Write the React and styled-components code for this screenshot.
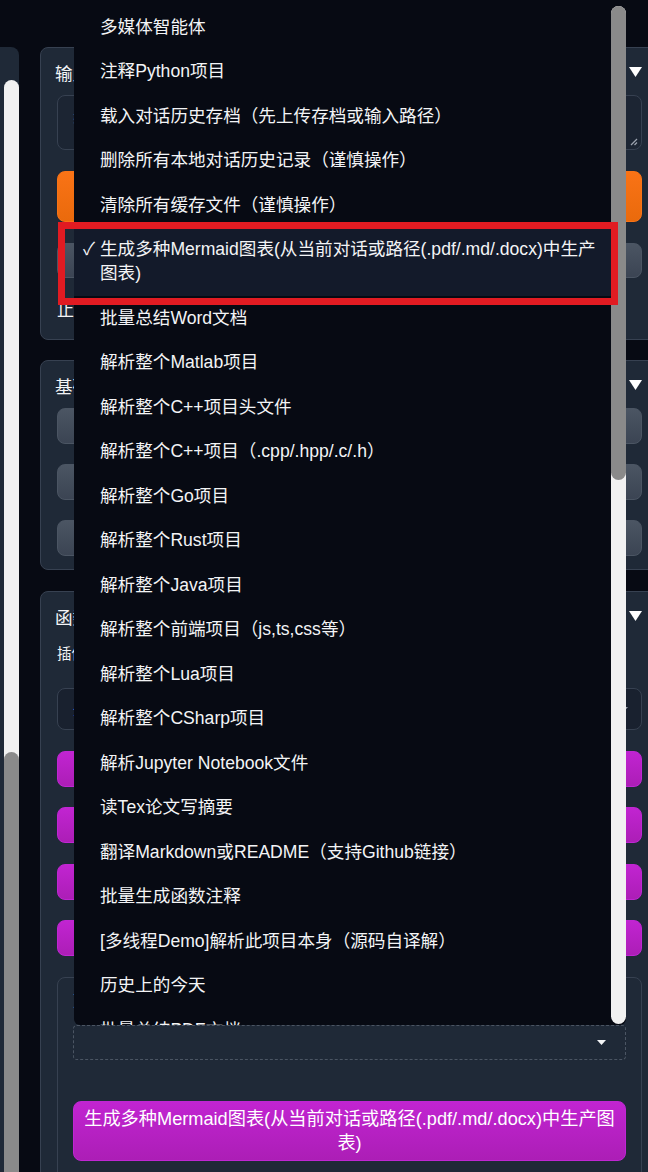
import React from 'react'
import styled, { createGlobalStyle } from 'styled-components'

const menuItems = [
  '多媒体智能体',
  '注释Python项目',
  '载入对话历史存档（先上传存档或输入路径）',
  '删除所有本地对话历史记录（谨慎操作）',
  '清除所有缓存文件（谨慎操作）',
  ['生成多种Mermaid图表(从当前对话或路径(.pdf/.md/.docx)中生产', '图表)'],
  '批量总结Word文档',
  '解析整个Matlab项目',
  '解析整个C++项目头文件',
  '解析整个C++项目（.cpp/.hpp/.c/.h）',
  '解析整个Go项目',
  '解析整个Rust项目',
  '解析整个Java项目',
  '解析整个前端项目（js,ts,css等）',
  '解析整个Lua项目',
  '解析整个CSharp项目',
  '解析Jupyter Notebook文件',
  '读Tex论文写摘要',
  '翻译Markdown或README（支持Github链接）',
  '批量生成函数注释',
  '[多线程Demo]解析此项目本身（源码自译解）',
  '历史上的今天',
  '批量总结PDF文档',
]

const SELECTED = 5

const App = () => (
  <>
    <GlobalStyle />
    <Page>
      <LeftPanel>
        <Track>
          <Thumb />
        </Track>
      </LeftPanel>

      <Main>
        <Card $bottom={16}>
          <Header>
            <span>输入区</span>
            <Caret />
          </Header>
          <Body $gap={21}>
            <TextBox>
              <Placeholder>输入问题</Placeholder>
              <ResizeHandle />
            </TextBox>
            <Button $kind="orange" $height={51}>提交</Button>
            <ButtonRow>
              <Button $kind="grey" $height={35}>重置</Button>
              <Button $kind="grey" $height={35}>停止</Button>
            </ButtonRow>
            <Note>止步提示</Note>
          </Body>
        </Card>

        <Card $bottom={13}>
          <Header>
            <span>基础功能区</span>
            <Caret />
          </Header>
          <Body $gap={20}>
            <Button $kind="grey" $height={36}>学术语料润色</Button>
            <Button $kind="grey" $height={36}>中文学术润色</Button>
            <Button $kind="grey" $height={36}>查找语法错误</Button>
          </Body>
        </Card>

        <Card $bottom={16} $push={1}>
          <Header>
            <span>函数插件区</span>
            <Caret />
          </Header>
          <Body $gap={20.5} $top={16}>
            <Field>
              <SmallLabel>插件分类</SmallLabel>
              <Select>
                <SelectText>全部</SelectText>
                <SmallCaret $color="#9ca3af" />
              </Select>
            </Field>
            <Button $kind="purple" $height={36}>批量翻译PDF文档</Button>
            <Button $kind="purple" $height={36}>Arxiv论文翻译</Button>
            <Button $kind="purple" $height={36}>图片生成</Button>
            <Button $kind="purple" $height={36}>知识库问答</Button>
            <InnerBox>
              <SmallLabel $size={15}>更多函数插件</SmallLabel>
              <Dropdown>
                <SmallCaret $color="#f3f4f6" />
                {renderMenu()}
              </Dropdown>
              <Button $kind="purple" $height={60} $size={18.2}>
                生成多种Mermaid图表(从当前对话或路径(.pdf/.md/.docx)中生产图
                <br />
                表)
              </Button>
            </InnerBox>
          </Body>
        </Card>
      </Main>

      <Highlight />
    </Page>
  </>
)

const renderMenu = () => (
  <Menu>
    <OptionList>
      {menuItems.map((item, index) => (
        <Option key={index} $selected={index === SELECTED}>
          <Check>{index === SELECTED ? '✓' : ''}</Check>
          {Array.isArray(item) ? (
            <span>
              {item[0]}
              <br />
              {item[1]}
            </span>
          ) : (
            <span>{item}</span>
          )}
        </Option>
      ))}
    </OptionList>
    <MenuTrack>
      <MenuThumb />
    </MenuTrack>
  </Menu>
)

const Caret = () => (
  <svg width="13" height="10" viewBox="0 0 13 10">
    <polygon points="0,0 13,0 6.5,10" fill="#ffffff" />
  </svg>
)

const SmallCaret = ({ $color }) => (
  <CaretSpot>
    <svg width="9" height="5" viewBox="0 0 9 5">
      <polygon points="0,0 9,0 4.5,5" fill={$color} />
    </svg>
  </CaretSpot>
)

const ResizeHandle = () => (
  <HandleSpot>
    <svg width="8" height="8" viewBox="0 0 8 8">
      <line x1="1" y1="7" x2="7" y2="1" stroke="#9ca3af" strokeWidth="1.2" />
      <line x1="4.5" y1="7" x2="7" y2="4.5" stroke="#9ca3af" strokeWidth="1.2" />
    </svg>
  </HandleSpot>
)

const GlobalStyle = createGlobalStyle`
  html, body {
    margin: 0;
    padding: 0;
    background: #070a13;
    overflow: hidden;
  }
  body {
    font-family: "Liberation Sans", "Noto Sans CJK SC", sans-serif;
    color: #f3f4f6;
  }
  * { box-sizing: border-box; }
`

const Page = styled.div`
  position: relative;
  display: flex;
  align-items: flex-start;
  gap: 21px;
  width: 680px;
  height: 1172px;
  padding-top: 47px;
`

const LeftPanel = styled.div`
  display: flex;
  flex-direction: column;
  width: 19px;
  height: 1125px;
  padding: 33px 0 0 4px;
  background: #1f2937;
  border-top-right-radius: 8px;
  flex-shrink: 0;
`

const Track = styled.div`
  flex: 1;
  display: flex;
  flex-direction: column;
  justify-content: flex-end;
  background: #f1f1f1;
  border-radius: 8px 8px 0 0;
`

const Thumb = styled.div`
  height: 420px;
  background: #8a8a8a;
  border-radius: 8px 8px 0 0;
`

const Main = styled.div`
  display: flex;
  flex-direction: column;
  gap: 20px;
  width: 619px;
  flex-shrink: 0;
`

const Card = styled.section`
  display: flex;
  flex-direction: column;
  margin-top: ${({ $push }) => $push || 0}px;
  padding: 12px 16px ${({ $bottom }) => $bottom}px;
  background: #1f2937;
  border: 1px solid #374151;
  border-radius: 8px;
`

const Header = styled.div`
  display: flex;
  justify-content: space-between;
  align-items: center;
  height: 24px;
  margin-left: -2px;
  font-size: 17.6px;
`

const Body = styled.div`
  display: flex;
  flex-direction: column;
  gap: ${({ $gap }) => $gap}px;
  margin-top: ${({ $top }) => $top || 11}px;
`

const TextBox = styled.div`
  position: relative;
  height: 55px;
  padding: 12px 15px;
  background: #1c2533;
  border: 1px solid #374151;
  border-radius: 8px;
`

const Placeholder = styled.span`
  font-size: 14px;
  color: #6b7280;
`

const HandleSpot = styled.span`
  position: absolute;
  right: 3px;
  bottom: 3px;
  display: flex;
`

const Button = styled.button`
  display: flex;
  align-items: center;
  justify-content: center;
  flex: 1;
  min-height: ${({ $height }) => $height}px;
  padding: 0 8px;
  font-family: inherit;
  font-size: ${({ $size }) => $size || 17.6}px;
  line-height: 24px;
  text-align: center;
  color: #ffffff;
  border-radius: 8px;
  ${({ $kind }) =>
    $kind === 'orange'
      ? `
    background: linear-gradient(to bottom, #f97316, #ea6a0c);
    border: 1px solid #f97316;
  `
      : $kind === 'purple'
      ? `
    background: linear-gradient(to bottom, #c124d1, #ac1eb6);
    border: 1px solid #c026d3;
  `
      : `
    background: linear-gradient(to bottom, #4b5563, #3b4453);
    border: 1px solid #4b5563;
  `}
`

const ButtonRow = styled.div`
  display: flex;
  gap: 12px;
`

const Note = styled.div`
  font-size: 17px;
  line-height: 24px;
`

const Field = styled.div`
  display: flex;
  flex-direction: column;
  gap: 24px;
`

const SmallLabel = styled.div`
  font-size: ${({ $size }) => $size || 14.5}px;
  line-height: ${({ $size }) => ($size ? 22 : 20)}px;
`

const Select = styled.div`
  display: flex;
  align-items: center;
  justify-content: space-between;
  height: 42px;
  padding: 0 13px 0 15px;
  background: #19212f;
  border: 1px solid #374151;
  border-radius: 8px;
`

const SelectText = styled.span`
  font-size: 14px;
  color: #60a5fa;
`

const CaretSpot = styled.span`
  display: flex;
`

const InnerBox = styled.div`
  display: flex;
  flex-direction: column;
  padding: 12px 15px 20px;
  border: 1px solid #374151;
  border-radius: 8px;
  & > ${Button} {
    margin-top: 41px;
  }
`

const Dropdown = styled.div`
  position: relative;
  display: flex;
  align-items: center;
  justify-content: flex-end;
  height: 35px;
  margin-top: 13px;
  padding-right: 19px;
  border: 1px dashed #4b5563;
  border-radius: 4px;
`

const Menu = styled.div`
  position: absolute;
  left: 0;
  right: -1px;
  bottom: calc(100% + 1px);
  z-index: 10;
  display: flex;
  height: 1024px;
  background: #070a13;
  border-radius: 0 0 6px 6px;
  overflow: hidden;
`

const OptionList = styled.ul`
  flex: 1;
  margin: 0;
  padding: 4px 0 0;
  list-style: none;
  overflow: hidden;
`

const Option = styled.li`
  display: flex;
  padding: 10.25px 8px 10.25px 9px;
  font-size: 17.6px;
  line-height: 24px;
  color: #f3f4f6;
  white-space: nowrap;
  background: ${({ $selected }) => ($selected ? '#131a2a' : 'transparent')};
`

const Check = styled.span`
  width: 17px;
  flex-shrink: 0;
`

const MenuTrack = styled.div`
  width: 15px;
  margin: 5px 0 1px;
  background: #f1f1f1;
  border-radius: 8px;
`

const MenuThumb = styled.div`
  height: 474px;
  background: #8a8a8a;
  border-radius: 8px;
`

const Highlight = styled.div`
  position: absolute;
  left: 58px;
  top: 222px;
  width: 560px;
  height: 83px;
  z-index: 20;
  border: 7px solid #e11b22;
  pointer-events: none;
`

export default App
